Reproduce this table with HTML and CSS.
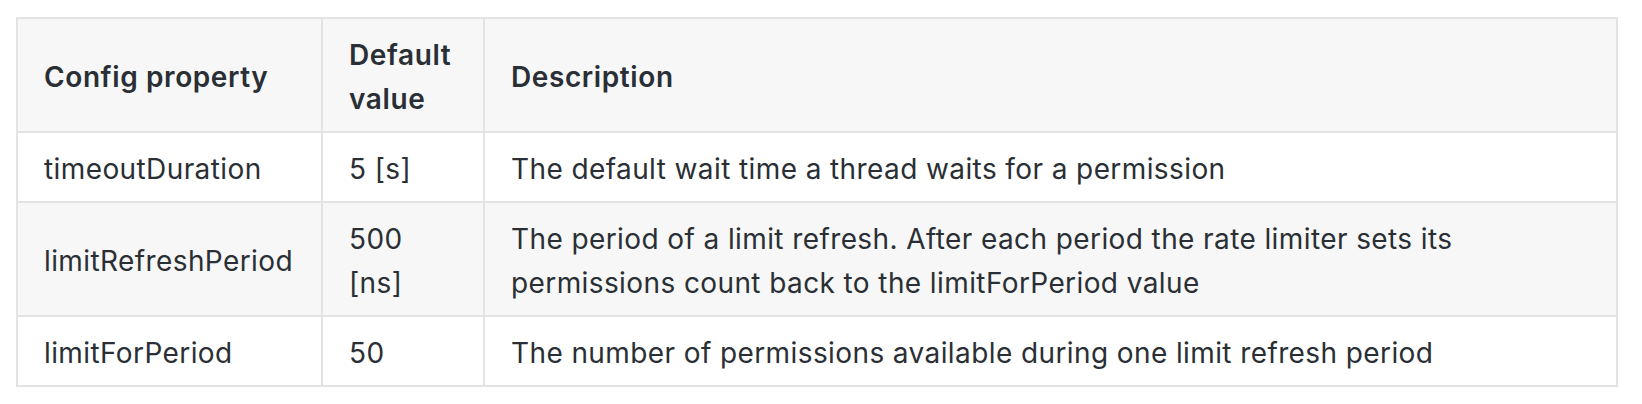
FILE: index.html
```html
<!DOCTYPE html>
<html lang="en">
<head>
<meta charset="utf-8">
<title>RateLimiter config</title>
<link rel="stylesheet" href="styles.css">
</head>
<body>
<table class="config-table">
  <colgroup>
    <col class="col-prop">
    <col class="col-default">
    <col class="col-desc">
  </colgroup>
  <thead>
    <tr>
      <th>Config property</th>
      <th>Default value</th>
      <th>Description</th>
    </tr>
  </thead>
  <tbody>
    <tr>
      <td>timeoutDuration</td>
      <td>5 [s]</td>
      <td>The default wait time a thread waits for a permission</td>
    </tr>
    <tr>
      <td>limitRefreshPeriod</td>
      <td>500 [ns]</td>
      <td>The period of a limit refresh. After each period the rate limiter sets its permissions count back to the limitForPeriod value</td>
    </tr>
    <tr>
      <td>limitForPeriod</td>
      <td>50</td>
      <td>The number of permissions available during one limit refresh period</td>
    </tr>
  </tbody>
</table>
</body>
</html>
```

FILE: styles.css
```css
html, body {
  margin: 0;
  padding: 0;
  background: #ffffff;
}

body {
  padding: 17px 16px 0 16px;
  font-family: Inter, "Noto Sans", "Liberation Sans", sans-serif;
  font-size: 28px;
  line-height: 44px;
  letter-spacing: 0.4px;
  color: #2a2f35;
}

.config-table {
  border-collapse: collapse;
  border-spacing: 0;
  table-layout: fixed;
  width: 1600px;
}

.col-prop { width: 305px; }
.col-default { width: 162px; }
.col-desc { width: 1133px; }

.config-table th,
.config-table td {
  border: 2px solid #e3e3e3;
  padding: 14px 26px 10px 26px;
  text-align: left;
  vertical-align: middle;
}

.config-table th {
  font-weight: 600;
  letter-spacing: 0.6px;
}

.config-table thead tr {
  background: #f7f7f7;
}

.config-table tbody tr:nth-child(2n) {
  background: #f7f7f7;
}
```
